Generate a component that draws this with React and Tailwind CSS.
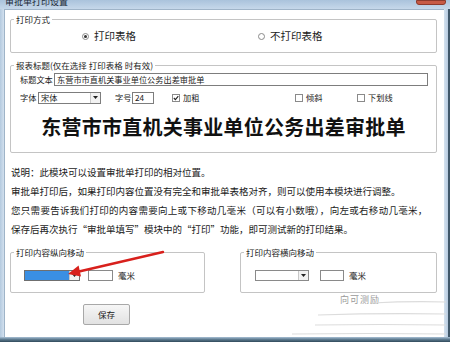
import React from "react";

const font = { fontFamily: '"Noto Sans CJK SC", "Noto Sans", sans-serif' };

// 分组框（Win7 风格的 GroupBox）
function Group({ label, className = "", children }) {
  return (
    <div className={`relative border border-[#c4c4c4] rounded-[2px] ${className}`}>
      <span className="absolute left-[3px] top-[-7px] bg-white px-[2px] text-[8.5px] leading-[12px] text-[#222] whitespace-nowrap">
        {label}
      </span>
      {children}
    </div>
  );
}

function Radio({ checked }) {
  return (
    <span className="w-[7px] h-[7px] rounded-full border border-[#8a8a8a] bg-white flex items-center justify-center shrink-0">
      {checked && <span className="w-[3px] h-[3px] rounded-full bg-[#333]" />}
    </span>
  );
}

function Check({ checked }) {
  return (
    <span className="w-[8px] h-[8px] border border-[#8a8a8a] bg-white flex items-center justify-center shrink-0">
      {checked && (
        <svg width="6" height="6" viewBox="0 0 6 6">
          <path d="M0.8 3 L2.4 4.6 L5.3 1.2" fill="none" stroke="#222" strokeWidth="1.1" />
        </svg>
      )}
    </span>
  );
}

function DropArrow() {
  return (
    <span className="w-[10px] h-full border-l border-[#c8c8c8] bg-[#f2f2f2] flex items-center justify-center">
      <svg width="5" height="3" viewBox="0 0 5 3">
        <path d="M0 0 H5 L2.5 3 Z" fill="#222" />
      </svg>
    </span>
  );
}

export default function App() {
  return (
    <div className="relative w-[450px] h-[342px] overflow-hidden bg-[#c3d5e7] text-[#1a1a1a]" style={font}>
      {/* 标题栏 */}
      <div className="relative h-[9px] bg-gradient-to-b from-[#aac3dc] to-[#c6d8ea] overflow-hidden">
        <div className="pl-[5px] mt-[-4px] text-[9px] leading-[12px] text-[#1c2a38]">审批单打印设置</div>
        <div className="absolute top-0 right-[4px] w-[30px] h-[5px] bg-[#c75a45] border border-[#8d3a2c] rounded-b-[3px]" />
      </div>

      <div className="flex h-[328px]">
        <div className="w-[4px] bg-gradient-to-r from-[#b4cadf] to-[#d2e0ee]" />

        {/* 客户区 */}
        <div className="w-[440px] bg-white border-t border-l border-[#9fb4c8]">
          {/* 打印方式 */}
          <Group label="打印方式" className="ml-[5px] mt-[9px] w-[427px] h-[34px]">
            <div className="flex items-center h-full pl-[71px] text-[10.5px] leading-[14px]">
              <div className="flex items-center gap-[5px] w-[176px]">
                <Radio checked />
                <span>打印表格</span>
              </div>
              <div className="flex items-center gap-[5px]">
                <Radio />
                <span>不打印表格</span>
              </div>
            </div>
          </Group>

          {/* 报表标题 */}
          <Group label="报表标题(仅在选择 打印表格 时有效)" className="ml-[5px] mt-[12px] w-[427px] h-[88px]">
            <div className="pt-[7px] pl-[9px] text-[8.2px] leading-[13px]">
              <div className="flex items-center h-[13px]">
                <span className="w-[34px]">标题文本</span>
                <div className="w-[374px] h-[13px] border border-[#7d7d7d] px-[2px] flex items-center">
                  东营市市直机关事业单位公务出差审批单
                </div>
              </div>
              <div className="flex items-center h-[13px] mt-[5px]">
                <span className="w-[18px]">字体</span>
                <div className="w-[63px] h-[12px] border border-[#7d7d7d] flex items-center">
                  <span className="flex-1 pl-[2px]">宋体</span>
                  <DropArrow />
                </div>
                <span className="ml-[14px] w-[17px]">字号</span>
                <div className="w-[22px] h-[12px] border border-[#7d7d7d] pl-[2px] flex items-center">24</div>
                <div className="ml-[18px] flex items-center gap-[3px] w-[123px]">
                  <Check checked />
                  <span>加粗</span>
                </div>
                <div className="flex items-center gap-[3px] w-[62px]">
                  <Check />
                  <span>倾斜</span>
                </div>
                <div className="flex items-center gap-[3px]">
                  <Check />
                  <span>下划线</span>
                </div>
              </div>
              <div className="mt-[10px] pr-[9px] text-center text-[20px] leading-[26px] font-semibold tracking-[0.26px] text-[#111]">
                东营市市直机关事业单位公务出差审批单
              </div>
            </div>
          </Group>

          {/* 说明文字 */}
          <div className="ml-[6px] mt-[10px] text-[9.5px] leading-[19px] whitespace-nowrap">
            <p>说明：此模块可以设置审批单打印的相对位置。</p>
            <p>审批单打印后，如果打印内容位置没有完全和审批单表格对齐，则可以使用本模块进行调整。</p>
            <p className="tracking-[0.3px]">您只需要告诉我们打印的内容需要向上或下移动几毫米（可以有小数哦），向左或右移动几毫米，</p>
            <p>保存后再次执行“审批单填写”模块中的“打印”功能，即可测试新的打印结果。</p>
          </div>

          {/* 纵向 / 横向移动 */}
          <div className="flex mt-[13px] text-[8.5px] leading-[12px]">
            <Group label="打印内容纵向移动" className="ml-[5px] w-[195px] h-[41px]">
              <div className="flex items-center pt-[16px] pl-[13px]">
                <div className="w-[56px] h-[11px] border border-[#6f6f6f] flex items-center">
                  <span className="flex-1 h-full bg-[#3a8fe3]" />
                  <DropArrow />
                </div>
                <div className="ml-[8px] w-[25px] h-[11px] border border-[#8a8a8a]" />
                <span className="ml-[5px]">毫米</span>
              </div>
            </Group>
            <Group label="打印内容横向移动" className="ml-[35px] w-[197px] h-[41px]">
              <div className="flex items-center pt-[16px] pl-[14px]">
                <div className="w-[54px] h-[11px] border border-[#8a8a8a] flex items-center">
                  <span className="flex-1" />
                  <DropArrow />
                </div>
                <div className="ml-[11px] w-[24px] h-[11px] border border-[#8a8a8a]" />
                <span className="ml-[5px]">毫米</span>
              </div>
            </Group>
          </div>

          <div className="flex items-start">
            <button className="ml-[78px] mt-[11px] w-[47px] h-[21px] border border-[#a8a8a8] rounded-[2px] bg-gradient-to-b from-[#f6f6f6] to-[#e2e2e2] text-[8.5px] text-[#222]">
              保存
            </button>
            <span className="ml-[210px] mt-[1px] text-[9px] leading-[12px] text-[#9a9a9a] tracking-[1px]">向可测励</span>
          </div>
        </div>

        <div className="w-[6px] bg-gradient-to-r from-[#d4e2ef] to-[#b7cbe0] border-r-2 border-[#40586a]" />
      </div>

      {/* 底边框 */}
      <div className="h-[5px] bg-gradient-to-b from-[#a9c1d6] via-[#5d7a8f] to-[#304a5b]" />

      {/* 红色箭头与右下角的拖影 */}
      <svg className="absolute left-0 top-0 pointer-events-none" width="450" height="342" viewBox="0 0 450 342">
        <g stroke="#dcdcdc" strokeWidth="1.2" fill="none">
          <path d="M372 303 Q410 301 446 302" />
          <path d="M318 315 Q380 313 446 314" />
          <path d="M315 325 Q380 324 446 325" />
          <path d="M292 334 Q370 333 446 334" />
        </g>
        <line x1="163" y1="252" x2="79" y2="271.5" stroke="#d8201c" strokeWidth="2.4" strokeLinecap="round" />
        <path d="M68 274 L81 276.6 L78.6 265.6 Z" fill="#d8201c" />
      </svg>
    </div>
  );
}
